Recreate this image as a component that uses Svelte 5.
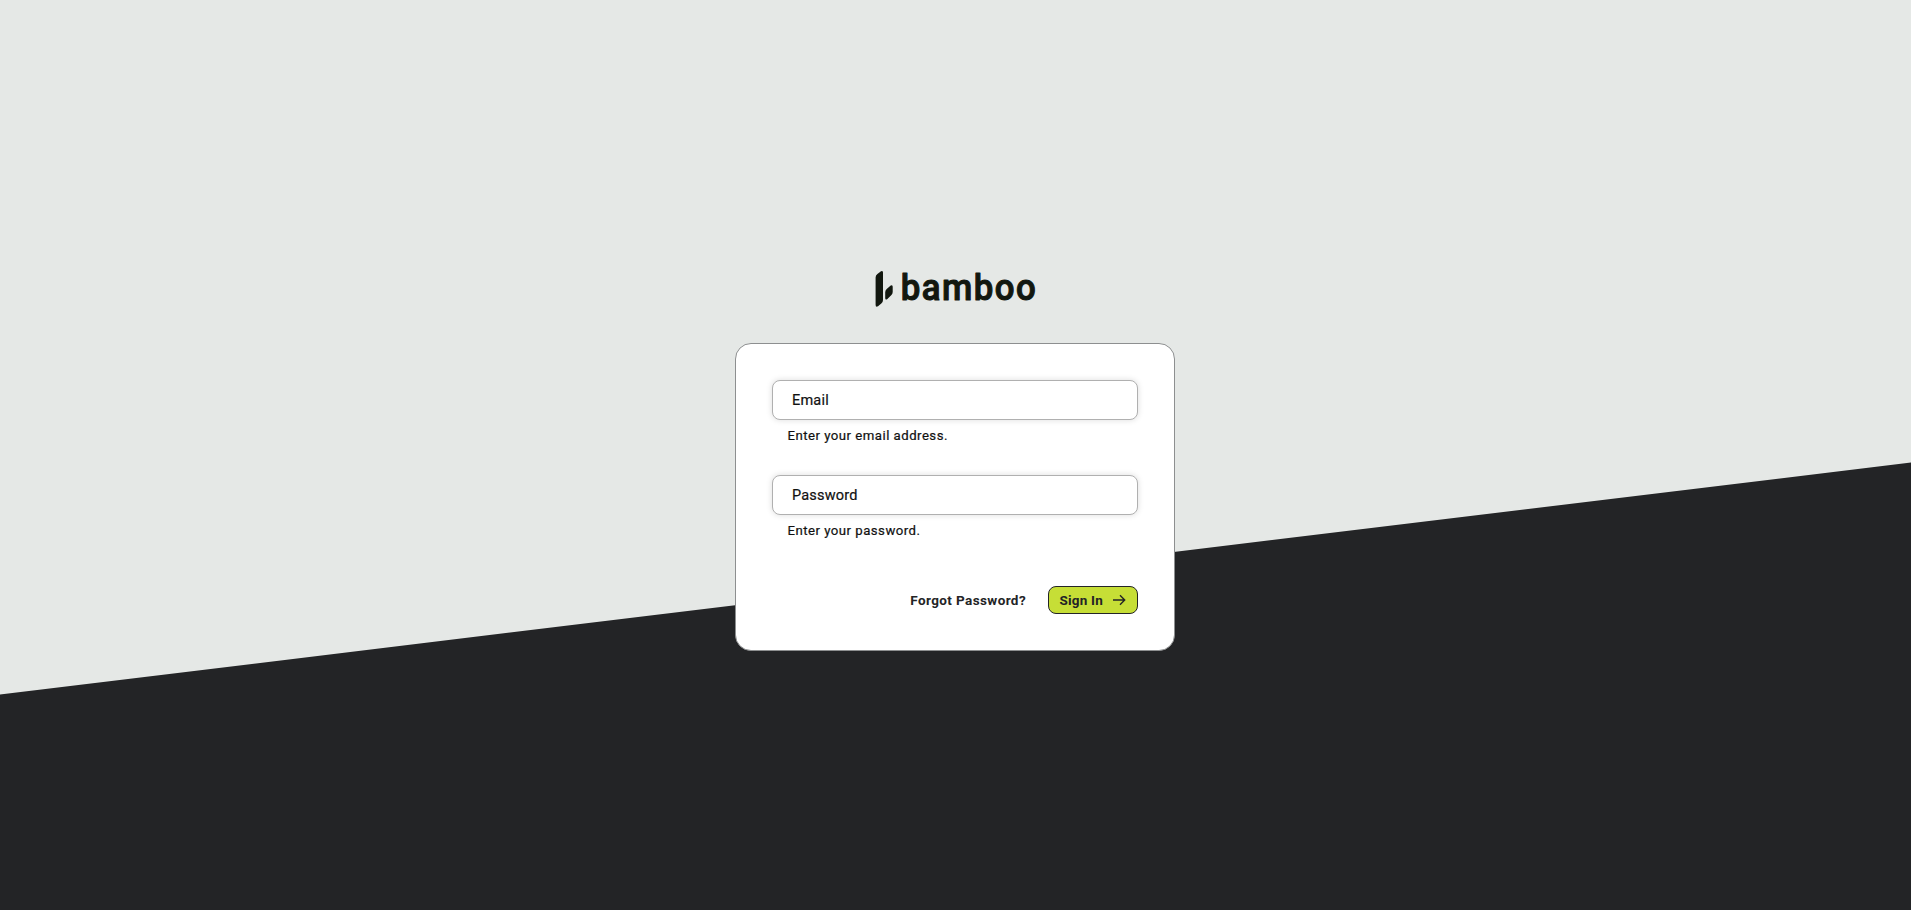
<script lang="ts">
  let email = $state('');
  let password = $state('');
</script>

<main>
  <svg class="backdrop" viewBox="0 0 1911 910" preserveAspectRatio="none" aria-hidden="true">
    <path d="M0 694.5 1911 462.5V910H0Z" fill="#232426" />
  </svg>

  <svg class="logo" viewBox="0 0 162 38" role="img" aria-label="bamboo">
    <g fill="#12170f">
      <path d="M1.6 7.4Q1.6 5.1 3.4 3.9L7 1.3Q9 .2 9 2.6V30Q9 32.3 7.3 33.6L4 36.2Q1.6 37.6 1.6 34.8Z" />
      <path d="M11.2 22.3Q11.2 20.4 12.7 19L16.7 15.6Q18.7 14.4 18.7 16.8V22Q18.7 24 17.2 25.3L13.4 29Q11.2 30.6 11.2 28Z" />
      <text class="wordmark" transform="translate(26.8 29.7) scale(0.94 1)" textLength="143.5" lengthAdjust="spacing">bamboo</text>
    </g>
  </svg>

  <form class="card" onsubmit={(event) => event.preventDefault()}>
    <label class="field">
      <input type="email" placeholder="Email" bind:value={email} />
      <span class="hint">Enter your email address.</span>
    </label>
    <label class="field">
      <input type="password" placeholder="Password" bind:value={password} />
      <span class="hint">Enter your password.</span>
    </label>
    <div class="actions">
      <span class="forgot">Forgot Password?</span>
      <button type="submit">
        <span>Sign In</span>
        <svg viewBox="0 0 14 12" width="14" height="12" aria-hidden="true">
          <path d="M1 6H12.6M8 1.3 12.7 6 8 10.7" fill="none" stroke="#232426" stroke-width="1.4" />
        </svg>
      </button>
    </div>
  </form>
</main>

<style>
  :global(body) {
    margin: 0;
  }
  main {
    position: relative;
    isolation: isolate;
    box-sizing: border-box;
    height: 100vh;
    padding: 270px 1px 0 0;
    overflow: hidden;
    display: flex;
    flex-direction: column;
    align-items: center;
    background: #e5e8e6;
    font-family: Roboto, sans-serif;
    color: #111;
  }
  .backdrop {
    position: absolute;
    inset: 0;
    z-index: -1;
    width: 100%;
    height: 100%;
  }
  .logo {
    flex: none;
    display: block;
    width: 162px;
    height: 38px;
    margin-bottom: 35px;
    overflow: visible;
  }
  .wordmark {
    font: 500 37px Roboto, sans-serif;
    stroke: #12170f;
    stroke-width: 1.1px;
    stroke-linejoin: round;
  }
  .card {
    box-sizing: border-box;
    flex: none;
    width: 440px;
    height: 308px;
    padding: 36px;
    border: 1px solid #8d8f90;
    border-radius: 16px;
    background: #fff;
  }
  .field {
    display: block;
    height: 95px;
  }
  input {
    display: block;
    box-sizing: border-box;
    width: 100%;
    height: 40px;
    padding: 0 19px;
    border: 1px solid #b0b0b0;
    border-radius: 8px;
    outline: 0;
    background: #fff;
    box-shadow: 0 0 6px rgba(0, 0, 0, 0.14);
    font: 400 14.5px Roboto, sans-serif;
    letter-spacing: 0.2px;
    -webkit-text-stroke: 0.2px #111;
  }
  input::placeholder {
    color: #111;
    opacity: 1;
  }
  .hint {
    display: block;
    padding: 8px 0 0 15.5px;
    font-size: 13.2px;
    line-height: 16px;
    letter-spacing: 0.48px;
    -webkit-text-stroke: 0.2px #111;
  }
  .actions {
    display: flex;
    justify-content: flex-end;
    align-items: center;
    gap: 22px;
    margin-top: 16px;
    height: 28px;
  }
  .forgot {
    font-size: 13.5px;
    font-weight: 700;
    letter-spacing: 0.4px;
    color: #232426;
  }
  button {
    box-sizing: border-box;
    width: 90px;
    height: 28px;
    padding: 0 11px 0 10.5px;
    border: 1px solid #232426;
    border-radius: 8px;
    background: #c6de36;
    display: flex;
    align-items: center;
    justify-content: space-between;
    font: 700 13.5px Roboto, sans-serif;
    letter-spacing: 0.2px;
    color: #232426;
  }
</style>
